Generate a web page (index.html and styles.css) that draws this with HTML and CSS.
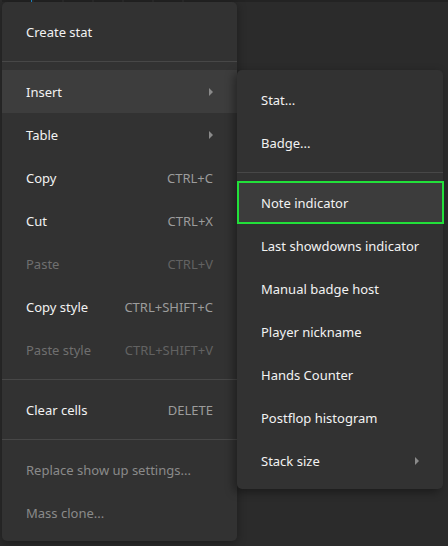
FILE: index.html
```html
<!DOCTYPE html>
<html>
<head>
<meta charset="utf-8">
<link rel="stylesheet" href="styles.css">
</head>
<body>
<div class="page">
  <div class="header-strip">
    <span class="hcell first"></span>
    <span class="hcell"></span>
    <span class="hcell"></span>
    <span class="hcell"></span>
    <span class="hcell"></span>
    <span class="hcell"></span>
    <span class="hcell last"></span>
  </div>

  <div class="menu main-menu">
    <div class="item"><span class="label">Create stat</span></div>
    <div class="sep"></div>
    <div class="item active"><span class="label">Insert</span><span class="arrow"></span></div>
    <div class="item"><span class="label">Table</span><span class="arrow"></span></div>
    <div class="item"><span class="label">Copy</span><span class="shortcut">CTRL+C</span></div>
    <div class="item"><span class="label">Cut</span><span class="shortcut">CTRL+X</span></div>
    <div class="item disabled"><span class="label">Paste</span><span class="shortcut">CTRL+V</span></div>
    <div class="item"><span class="label">Copy style</span><span class="shortcut">CTRL+SHIFT+C</span></div>
    <div class="item disabled"><span class="label">Paste style</span><span class="shortcut">CTRL+SHIFT+V</span></div>
    <div class="sep"></div>
    <div class="item"><span class="label">Clear cells</span><span class="shortcut">DELETE</span></div>
    <div class="sep"></div>
    <div class="item muted"><span class="label">Replace show up settings...</span></div>
    <div class="item muted"><span class="label">Mass clone...</span></div>
  </div>

  <div class="menu sub-menu">
    <div class="item"><span class="label">Stat...</span></div>
    <div class="item"><span class="label">Badge...</span></div>
    <div class="sep"></div>
    <div class="item focused"><span class="label">Note indicator</span></div>
    <div class="item"><span class="label">Last showdowns indicator</span></div>
    <div class="item"><span class="label">Manual badge host</span></div>
    <div class="item"><span class="label">Player nickname</span></div>
    <div class="item"><span class="label">Hands Counter</span></div>
    <div class="item"><span class="label">Postflop histogram</span></div>
    <div class="item"><span class="label">Stack size</span><span class="arrow"></span></div>
  </div>
</div>
</body>
</html>
```

FILE: styles.css
```css
* { box-sizing: border-box; }

html, body {
  margin: 0;
  padding: 0;
  background: #2b2b2b;
  width: 448px;
  height: 546px;
  overflow: hidden;
}

.page {
  position: relative;
  width: 448px;
  height: 546px;
  font-family: "Noto Sans", "Open Sans", sans-serif;
  font-size: 13px;
}

.header-strip {
  display: flex;
  gap: 2px;
  padding-left: 2px;
  height: 2px;
}

.hcell {
  width: 28px;
  height: 2px;
  background: #232323;
}

.hcell.first {
  width: 30px;
  border-right: 1px solid #1d8fd0;
}

.hcell.last {
  flex: 1;
}

.menu {
  position: absolute;
  background: #323232;
  border-radius: 5px;
  box-shadow: 0 2px 10px rgba(0, 0, 0, 0.35);
  color: #f2f2f2;
}

.main-menu {
  left: 2px;
  top: 2px;
  width: 235px;
  padding: 8px 0 7px;
}

.sub-menu {
  left: 237px;
  top: 70px;
  width: 206px;
  padding: 8px 0 7px;
  box-shadow: -3px 3px 10px rgba(0, 0, 0, 0.4);
}

.item {
  height: 43px;
  display: flex;
  align-items: center;
  justify-content: space-between;
  padding: 0 24px 0 24px;
  white-space: nowrap;
}

.item.active {
  background: #3d3d3d;
}

.item.focused {
  background: #3c3c3c;
  border: 2px solid #22e03a;
  margin-right: -1px;
  padding-left: 22px;
}

.shortcut {
  color: #9c9c9c;
}

.item.disabled .label {
  color: #6f6f6f;
}

.item.disabled .shortcut {
  color: #626262;
}

.item.muted .label {
  color: #8a8a8a;
}

.arrow {
  width: 0;
  height: 0;
  border-top: 4px solid transparent;
  border-bottom: 4px solid transparent;
  border-left: 4px solid #8a8a8a;
}

.sep {
  height: 17px;
  display: flex;
  align-items: center;
}

.sep::before {
  content: "";
  display: block;
  width: 100%;
  height: 1px;
  background: #474747;
}
```
